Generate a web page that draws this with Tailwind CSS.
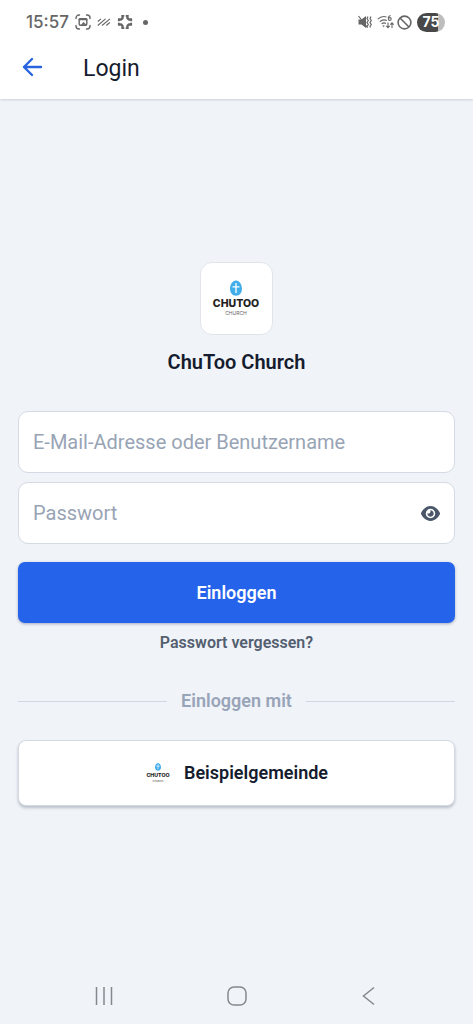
<!DOCTYPE html>
<html lang="de">
<head>
<meta charset="utf-8">
<meta name="viewport" content="width=device-width, initial-scale=1">
<title>Login</title>
<script src="https://cdn.jsdelivr.net/npm/@tailwindcss/browser@4"></script>
</head>
<body class="flex min-h-screen flex-col bg-[#f0f3f8] font-['Roboto',sans-serif] text-[#151c2e]">
  <header class="bg-white shadow-[0_1px_2px_rgba(30,40,60,0.16)]">
    <div class="flex h-11 items-center justify-between pr-7 pl-[26px] text-[#666]">
      <div class="flex items-center gap-[6px]">
        <span class="font-['Inter',sans-serif] text-[17px] leading-4 font-medium">15:57</span>
        <svg class="size-4" viewBox="0 0 16 16" fill="none" stroke="currentColor" stroke-width="1.400" stroke-linecap="round" aria-hidden="true">
          <path d="M1 4.500V4a3 3 0 0 1 3-3h.5M11.500 1h.5a3 3 0 0 1 3 3v.5M15 11.500v.5a3 3 0 0 1-3 3h-.5M4.500 15H4a3 3 0 0 1-3-3v-.5"/>
          <rect x="4.200" y="4.700" width="7.600" height="6.600" rx="1.200"/>
          <path d="M4.300 5.300h7.400" stroke-width="1.800"/>
          <path d="m6.500 10.800 2-2.600 2.600 2.600z" fill="currentColor" stroke-width="0.600"/>
        </svg>
        <svg class="h-4 w-[14px]" viewBox="0 0 14 16" fill="none" stroke="currentColor" stroke-width="1.100" aria-hidden="true">
          <path d="M.8 7.500 4 4.800M.8 11.500 8.500 4.800M5 11.500l8-6.700M9.300 11.500l3.500-3"/>
        </svg>
        <svg class="size-4" viewBox="0 0 16 16" fill="none" stroke="currentColor" stroke-width="2.400" stroke-linejoin="round" aria-hidden="true">
          <path d="M5.500 1v3.200L4.200 5.500H1M10.500 1v3.200l1.300 1.300H15M5.500 15v-3.200l-1.300-1.300H1M10.500 15v-3.200l1.300-1.300H15"/>
          <path d="M5 1.800h2.300M8.700 1.800H11M5 14.200h2.300M8.700 14.200H11M1.800 5v2.300M1.800 8.700V11M14.200 5v2.300M14.200 8.700V11" stroke-width="1.800"/>
        </svg>
        <span class="ml-1 size-[5px] rounded-full bg-current"></span>
      </div>
      <div class="flex items-center gap-[5px]">
        <svg class="h-4 w-[14px]" viewBox="0 0 14 16" fill="none" stroke="currentColor" stroke-width="1.200" aria-hidden="true">
          <path d="M.5 5.500h3L8 2v12l-4.500-3.500h-3z" fill="currentColor" stroke="none"/>
          <path d="m.5 2 9 11.500"/>
          <path d="m10 2.500-1 2 1.300 2L9 8.500l1.300 2-1.300 2 .5 1M13 2.500l-1 2 1.300 2-1.300 2 1.300 2-1.300 2 .5 1"/>
        </svg>
        <svg class="h-4 w-[17px]" viewBox="0 0 17 16" fill="none" stroke="currentColor" stroke-width="1.100" aria-hidden="true">
          <path d="M.8 5.200C3.200 2.800 6.500 2 9.500 3M2.800 7.600c2-1.800 4.500-2.200 7-1.100M4.600 9.800c1.400-1 3-1.100 4.300-.4"/>
          <path d="M5.300 11.500h2.600l-1.300 1.800z" fill="currentColor" stroke="none"/>
          <path d="M13.500 1.500c-1.700.4-2.200 1.700-2.100 3"/><circle cx="12.800" cy="5" r="1.400"/>
          <path d="M11 8.500v5M9.300 11.800l1.700 1.800 1.700-1.800M15 14V9M13.300 10.700 15 8.900l1.700 1.800"/>
        </svg>
        <svg class="-ml-[2px] size-[15px]" viewBox="0 0 15 15" fill="none" stroke="currentColor" stroke-width="1.600" aria-hidden="true">
          <circle cx="7.500" cy="7.500" r="6.400"/><path d="m3 3 9 9"/>
        </svg>
        <span class="flex h-[19px] w-7 items-center justify-center rounded-full bg-linear-to-r from-[#484848] from-75% to-[#bdbdbd] to-75% font-['Inter',sans-serif] text-sm font-bold text-white">75</span>
      </div>
    </div>
    <div class="flex h-[55px] items-start gap-10 pl-[22px]">
      <button type="button" aria-label="Zurück" class="mt-[13px] text-[#2a63df]">
        <svg class="h-5 w-[21px]" viewBox="0 0 21 20" fill="none" stroke="currentColor" stroke-width="2.400" stroke-linecap="round" stroke-linejoin="round" aria-hidden="true"><path d="M19 10H2M10 2l-8 8 8 8"/></svg>
      </button>
      <h1 class="mt-[9px] text-[23px] leading-8">Login</h1>
    </div>
  </header>

  <main class="flex flex-1 flex-col items-center justify-center px-[18px]">
    <div class="flex size-[73px] items-center justify-center rounded-xl border border-[#e1e5ea] bg-white">
      <svg class="h-12 w-[50px]" viewBox="0 0 50 48" role="img" aria-label="ChuToo Church">
        <path d="M24 5.500c3.700 0 6 4.600 6 8.300 0 4.200-2.500 7-6 7s-6-2.800-6-7c0-3.700 2.300-8.300 6-8.300z" fill="#41aeea"/>
        <path d="M24 8v10M20.500 11.800h7" stroke="#fff" stroke-width="1.300"/>
        <text x="24" y="32" text-anchor="middle" font-family="Inter, sans-serif" font-size="10.500" font-weight="800" fill="#222">CHUTOO</text>
        <text x="24" y="40" text-anchor="middle" font-family="Inter, sans-serif" font-size="5" fill="#666">CHURCH</text>
      </svg>
    </div>
    <h2 class="mt-[11px] text-xl leading-8 font-semibold">ChuToo Church</h2>

    <form class="mt-[33px] flex w-full flex-col">
      <input type="text" aria-label="E-Mail-Adresse oder Benutzername" placeholder="E-Mail-Adresse oder Benutzername" class="h-[62px] w-full rounded-[10px] border border-[#d3dae3] bg-white px-[14px] text-xl placeholder:text-[#98a4b5]">
      <div class="mt-[9px] flex h-[62px] items-center rounded-[10px] border border-[#d3dae3] bg-white pr-[14px]">
        <input type="password" aria-label="Passwort" placeholder="Passwort" class="h-full min-w-0 flex-1 bg-transparent px-[14px] text-xl placeholder:text-[#98a4b5]">
        <button type="button" aria-label="Passwort anzeigen" class="text-[#4a5769]">
          <svg class="h-[15px] w-[19px]" viewBox="0 0 576 448" fill="currentColor" aria-hidden="true"><path d="M288 0C207 0 142 37 95 81 48 124 17 176 3 212c-4 8-4 17 0 25 14 35 45 87 92 131 47 43 112 80 193 80s146-37 193-80c47-44 78-96 93-131 3-8 3-17 0-25-15-36-46-88-93-131C434 37 369 0 288 0zM144 224a144 144 0 1 1 288 0 144 144 0 1 1-288 0zm144-64c0 35-29 64-64 64-7 0-14-1-20-3-6-2-13 2-12 7 0 7 1 14 3 21 14 51 66 82 118 68s82-66 68-118c-11-42-48-70-89-71-6-1-9 6-7 12 2 6 3 13 3 20z"/></svg>
        </button>
      </div>
      <button type="submit" class="mt-[18px] h-[61px] w-full rounded-[7px] bg-[#2563eb] text-lg font-semibold text-white shadow-[0_1px_3px_rgba(20,40,90,0.35)]">Einloggen</button>
    </form>
    <a href="#" class="mt-2 text-base leading-6 font-semibold text-[#535f70]">Passwort vergessen?</a>

    <div class="mt-8 flex w-full items-center gap-[14px] text-lg leading-7 font-semibold text-[#98a4b8]">
      <span class="h-px flex-1 bg-[#cdd6e2]"></span>Einloggen mit<span class="h-px flex-1 bg-[#cdd6e2]"></span>
    </div>

    <button type="button" class="mt-[25px] flex h-[66px] w-full items-center justify-center gap-[13px] rounded-lg border border-[#d3dae3] bg-white text-lg font-semibold shadow-[0_2px_3px_rgba(30,40,60,0.25)]">
      <svg class="h-6 w-[26px]" viewBox="0 0 50 48" aria-hidden="true">
        <path d="M25 4c3.700 0 6 4.600 6 8.300 0 4.200-2.500 7-6 7s-6-2.800-6-7C19 8.600 21.300 4 25 4z" fill="#41aeea"/>
        <path d="M25 6.500v10M21.500 10.300h7" stroke="#fff" stroke-width="1.300"/>
        <text x="25" y="32" text-anchor="middle" font-family="Inter, sans-serif" font-size="10.500" font-weight="800" fill="#222">CHUTOO</text>
        <text x="25" y="41" text-anchor="middle" font-family="Inter, sans-serif" font-size="5" fill="#666">CHURCH</text>
      </svg>
      Beispielgemeinde
    </button>
  </main>

  <nav aria-label="Systemnavigation" class="flex h-[55px] items-center justify-between px-[94px] pb-[2px] text-[#85888e]">
    <button type="button" aria-label="Letzte Apps"><svg class="size-5" viewBox="0 0 20 20" stroke="currentColor" stroke-width="1.500" aria-hidden="true"><path d="M2.500 1v18M10 1v18M17.500 1v18"/></svg></button>
    <button type="button" aria-label="Startseite"><svg class="size-5" viewBox="0 0 20 20" fill="none" stroke="currentColor" stroke-width="1.500" aria-hidden="true"><rect x="1" y="1" width="18" height="18" rx="6"/></svg></button>
    <button type="button" aria-label="Zurück"><svg class="size-5" viewBox="0 0 20 20" fill="none" stroke="currentColor" stroke-width="1.500" aria-hidden="true"><path d="M15 1.500 4.500 10 15 18.500"/></svg></button>
  </nav>
</body>
</html>
